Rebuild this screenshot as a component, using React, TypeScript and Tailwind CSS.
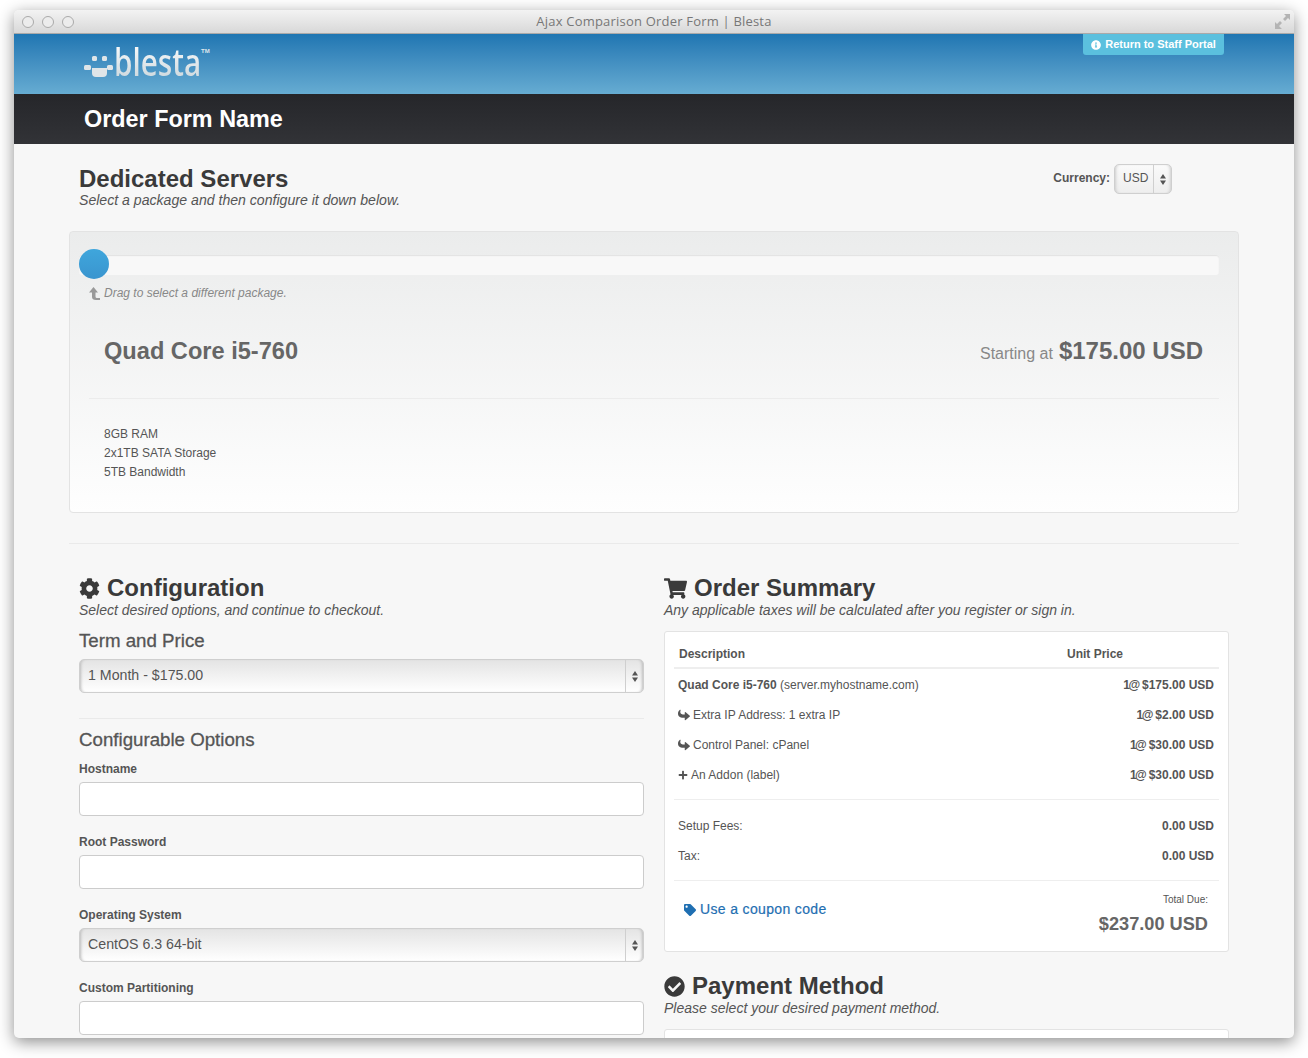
import React from 'react';
import { FaCog, FaShoppingCart, FaCheckCircle, FaTag, FaInfoCircle, FaPlus, FaShare } from 'react-icons/fa';

function SelectBox({ value }: { value: string }) {
  return (
    <div className="flex h-[34px] rounded-[5px] border border-[#cfcfcf] bg-gradient-to-b from-[#e4e4e4] to-white shadow-[inset_3px_0_3px_-2px_#bbb,inset_-3px_0_3px_-2px_#bbb]">
      <div className="flex-1 pl-[8px] text-[14.200px] leading-[30px] text-[#555]">{value}</div>
      <div className="flex w-[18px] flex-col items-center justify-center gap-[2px] border-l border-[#cfcfcf]">
        <Arrows />
      </div>
    </div>
  );
}

function Arrows() {
  return (
    <svg width="6" height="11" viewBox="0 0 6 11" fill="#555">
      <path d="M3 0 6 4.500H0zM0 6.500h6L3 11z" />
    </svg>
  );
}

function Field({ label, className = '' }: { label: string; className?: string }) {
  return (
    <div className={className}>
      <label className="block h-[18px] text-[12px] font-bold leading-[18px] text-[#555]">{label}</label>
      <input className="mt-[4px] block h-[34px] w-full rounded-[4px] border border-[#ccc] bg-white" />
    </div>
  );
}

function SectionHead({ icon, title, sub, subClass = '' }: { icon: React.ReactNode; title: string; sub: string; subClass?: string }) {
  return (
    <div>
      <h2 className="flex h-[30px] items-center pt-[2px] text-[24px] font-bold leading-[28px] text-[#3a3a3a]">
        {icon}
        {title}
      </h2>
      <p className={`h-[16px] text-[14px] italic leading-[16px] text-[#555] ${subClass}`}>{sub}</p>
    </div>
  );
}

function LineItem({ icon, children, qty, price }: { icon?: React.ReactNode; children: React.ReactNode; qty?: string; price: string }) {
  return (
    <div className="flex h-[30px] items-center justify-between pl-[4px] pr-[5px] text-[12px] text-[#555]">
      <div className="flex items-center">
        {icon}
        <span>{children}</span>
      </div>
      <span className="font-bold">
        {qty && <span className="tracking-[-1.500px]">{qty}</span>}
        {qty && ' '}
        {price}
      </span>
    </div>
  );
}

export default function App() {
  return (
    <div className="h-[1058px] overflow-hidden bg-white pl-[14px] pt-[10px] font-['Liberation_Sans',Arial,sans-serif]">
      <div className="h-[1028px] w-[1280px] overflow-hidden rounded-[5px] bg-[#f7f7f7] shadow-[0_4px_16px_rgba(0,0,0,0.45)]">
        {/* mac title bar */}
        <div className="flex h-[24px] items-center border-b border-[#a9a9a9] bg-gradient-to-b from-[#f3f3f3] to-[#d8d8d8] pl-[8px] pr-[4px]">
          <div className="flex w-[200px] gap-[8px]">
            <span className="h-[12px] w-[12px] rounded-full border border-[#aaa] bg-[#ececec]" />
            <span className="h-[12px] w-[12px] rounded-full border border-[#aaa] bg-[#ececec]" />
            <span className="h-[12px] w-[12px] rounded-full border border-[#aaa] bg-[#ececec]" />
          </div>
          <div className="mt-px flex-1 pr-[4px] text-center font-['Open_Sans',sans-serif] text-[13px] tracking-[0.2px] text-[#777]">
            Ajax Comparison Order Form | Blesta
          </div>
          <div className="flex w-[200px] justify-end">
            <svg width="15" height="15" viewBox="0 0 15 15" fill="#b4b4b4">
              <path d="M9 0h6v6l-2-2-3 3-2-2 3-3zM0 15V8l2 2 3-3 2 2-3 3 3 3z" />
            </svg>
          </div>
        </div>

        {/* logo strip */}
        <div className="flex h-[60px] justify-between bg-gradient-to-b from-[#1f76b2] to-[#66acd2] pl-[70px] pr-[70px]">
          <div className="flex items-start pt-[6px]">
            <svg width="29" height="24" viewBox="0 0 29 24" fill="#dfe5e8" className="mt-[14px]">
              <rect x="8" y="2" width="5" height="5" rx="1.500" />
              <rect x="18" y="2" width="5" height="5" rx="1.500" />
              <rect x="0" y="11" width="7" height="5" rx="1.500" />
              <rect x="23" y="11" width="6" height="5" rx="1.500" />
              <path d="M8 14h15v5a4 4 0 0 1-4 4h-7a4 4 0 0 1-4-4z" />
            </svg>
            <div className="ml-[1px] w-[87px]">
              <span className="block w-max origin-left scale-x-[0.78] bg-gradient-to-b from-white to-[#c9d5db] bg-clip-text font-['Open_Sans',sans-serif] text-[38px] font-semibold leading-[42px] text-transparent">
                blesta
              </span>
            </div>
            <span className="mt-[7px] text-[6px] font-bold leading-[8px] text-[#dfe7ec]">TM</span>
          </div>
          <div className="flex h-[21px] w-[141px] items-center justify-center rounded-b-[3px] bg-[#5bc0de] text-[11px] font-bold text-white">
            <FaInfoCircle className="mr-[4px] text-[10px]" />
            Return to Staff Portal
          </div>
        </div>

        <div className="flex h-[50px] items-center bg-gradient-to-b from-[#25262a] to-[#323337] pl-[70px] pt-[1px] text-[23.400px] font-bold text-white">
          Order Form Name
        </div>

        {/* content */}
        <div className="ml-[55px] w-[1170px]">
          <div className="flex h-[87px] justify-between px-[10px] pt-[19px]">
            <div>
              <h1 className="h-[30px] text-[24px] font-bold leading-[31px] text-[#3a3a3a]">Dedicated Servers</h1>
              <p className="-mt-px h-[16px] text-[14.100px] italic leading-[16px] text-[#555]">Select a package and then configure it down below.</p>
            </div>
            <div className="mr-[57px] mt-px flex h-[30px] items-center text-[12px] font-bold text-[#555]">
              <span className="mb-[2px] mr-[4px]">Currency:</span>
              <div className="flex h-[30px] w-[58px] rounded-[5px] border border-[#cfcfcf] bg-gradient-to-b from-[#fafafa] to-[#eee] shadow-[inset_3px_0_3px_-2px_#ccc,inset_-3px_0_3px_-2px_#ccc]">
                <span className="flex-1 pl-[8px] text-[12px] font-normal leading-[26px]">USD</span>
                <div className="flex w-[18px] items-center justify-center border-l border-[#cfcfcf]">
                  <Arrows />
                </div>
              </div>
            </div>
          </div>

          {/* package panel */}
          <div className="h-[282px] rounded-[4px] border border-[#e3e3e3] bg-gradient-to-b from-[#ebecec] to-[#fefefe]">
            <div className="relative ml-[9px] mr-[19px] mt-[23px] h-[20px] rounded-[3px] bg-[#f8f8f8] shadow-[inset_0_1px_1px_#e2e2e2]">
              <div className="absolute left-0 top-[-6px] h-[30px] w-[30px] rounded-full bg-gradient-to-b from-[#3fa6dc] to-[#3a95cf]" />
            </div>
            <div className="ml-[19px] mt-[10px] flex h-[16px] items-center text-[12px] italic text-[#888]">
              <svg width="11" height="13" viewBox="0 0 11 13" fill="#999" className="mr-[4px]">
                <path d="M4.500 0 9 5.500H6.500V9.500Q6.500 11 8 11h3v2H7Q3 13 3 10V5.500H0z" />
              </svg>
              Drag to select a different package.
            </div>
            <div className="ml-[34px] mr-[35px] mt-[32px] flex h-[36px] items-baseline justify-between text-[#666]">
              <span className="text-[23.600px] font-bold">Quad Core i5-760</span>
              <span className="text-[16px] text-[#888]">
                Starting at
                <span className="ml-[6px] text-[24px] font-bold text-[#666]">$175.00 USD</span>
              </span>
            </div>
            <div className="ml-[19px] mr-[19px] mt-[29px] border-t border-[#ececec]" />
            <div className="ml-[34px] mt-[26px] text-[12px] leading-[19px] text-[#555]">
              <div>8GB RAM</div>
              <div>2x1TB SATA Storage</div>
              <div>5TB Bandwidth</div>
            </div>
          </div>

          <div className="mt-[30px] border-t border-[#eaeaea]" />

          <div className="mt-[28px] flex">
            {/* left column */}
            <div className="ml-[10px] w-[565px]">
              <SectionHead icon={<FaCog className="mr-[7px] text-[21px]" />} title="Configuration" sub="Select desired options, and continue to checkout." subClass="text-[14.100px]" />
              <h3 className="mt-[12px] h-[22px] text-[18.700px] leading-[22px] text-[#555] [-webkit-text-stroke:0.3px_#555]">Term and Price</h3>
              <div className="mt-[7px]">
                <SelectBox value="1 Month - $175.00" />
              </div>
              <div className="mt-[25px] border-t border-[#eaeaea]" />
              <h3 className="mt-[10px] h-[22px] text-[18.700px] leading-[22px] text-[#555] [-webkit-text-stroke:0.3px_#555]">Configurable Options</h3>
              <Field label="Hostname" className="mt-[9px]" />
              <Field label="Root Password" className="mt-[17px]" />
              <div className="mt-[17px]">
                <label className="block h-[18px] text-[12px] font-bold leading-[18px] text-[#555]">Operating System</label>
                <div className="mt-[4px]">
                  <SelectBox value="CentOS 6.3 64-bit" />
                </div>
              </div>
              <Field label="Custom Partitioning" className="mt-[17px]" />
            </div>

            {/* right column */}
            <div className="ml-[20px] w-[565px]">
              <SectionHead icon={<FaShoppingCart className="mr-[7px] text-[23px]" />} title="Order Summary" sub="Any applicable taxes will be calculated after you register or sign in." />
              <div className="mt-[13px] h-[321px] rounded-[3px] border border-[#e3e3e3] bg-white px-[9px]">
                <div className="flex h-[37px] items-end border-b-2 border-[#eee] pb-[4px] text-[12px] font-bold text-[#555]">
                  <span className="ml-[5px] w-[388px]">Description</span>
                  <span>Unit Price</span>
                </div>
                <div className="pt-[1px]">
                  <LineItem qty="1@" price="$175.00 USD">
                    <b>Quad Core i5-760</b> (server.myhostname.com)
                  </LineItem>
                  <LineItem icon={<FaShare className="mr-[3px] -scale-y-100 text-[12px]" />} qty="1@" price="$2.00 USD">Extra IP Address: 1 extra IP</LineItem>
                  <LineItem icon={<FaShare className="mr-[3px] -scale-y-100 text-[12px]" />} qty="1@" price="$30.00 USD">Control Panel: cPanel</LineItem>
                  <LineItem icon={<FaPlus className="mr-[3px] text-[10px]" />} qty="1@" price="$30.00 USD">An Addon (label)</LineItem>
                </div>
                <div className="mt-[9px] border-t border-[#eee] pt-[11px]">
                  <LineItem price="0.00 USD">Setup Fees:</LineItem>
                  <LineItem price="0.00 USD">Tax:</LineItem>
                </div>
                <div className="mt-[9px] flex items-start justify-between border-t border-[#eee] pr-[11px]">
                  <a className="ml-[10px] mt-[18px] flex items-center text-[14px] tracking-[0.35px] text-[#1f6fb2] [-webkit-text-stroke:0.2px_#1f6fb2]">
                    <FaTag className="mr-[4px] text-[12px]" />
                    Use a coupon code
                  </a>
                  <div className="mt-[12px] text-right text-[#555]">
                    <div className="text-[10px] leading-[14px]">Total Due:</div>
                    <div className="mt-[6px] text-[18.200px] font-bold leading-[22px] text-[#666]">$237.00 USD</div>
                  </div>
                </div>
              </div>
              <div className="mt-[18px]">
                <SectionHead icon={<FaCheckCircle className="mr-[7px] text-[21px]" />} title="Payment Method" sub="Please select your desired payment method." />
              </div>
              <div className="mt-[13px] h-[40px] rounded-[3px] border border-[#e3e3e3] bg-white" />
            </div>
          </div>
        </div>
      </div>
    </div>
  );
}
